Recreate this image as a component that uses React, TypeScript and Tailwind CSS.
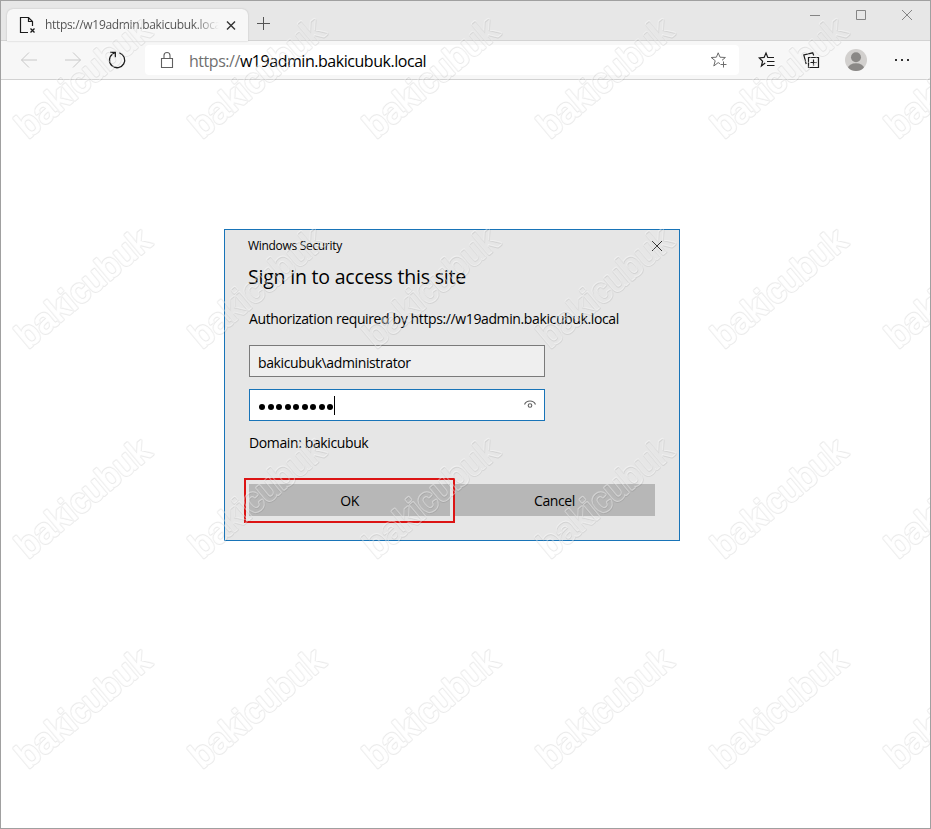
import type { ReactNode } from "react";

interface IconProps {
  size: number;
  className?: string;
  children: ReactNode;
}

function Icon({ size, className = "", children }: IconProps) {
  return (
    <svg
      width={size}
      height={size}
      viewBox={`0 0 ${size} ${size}`}
      fill="none"
      stroke="currentColor"
      className={`flex-shrink-0 ${className}`}
    >
      {children}
    </svg>
  );
}

function TabStrip() {
  return (
    <div className="flex h-10 border-b border-[#d3d3d3] bg-[#e7e7e7]">
      {/* Active tab */}
      <div className="mt-2 -mb-px ml-[6px] flex h-8 w-[241px] items-center rounded-t-md bg-[#f7f7f7] pl-3 shadow-[0_0_2px_#bbbbbb]">
        <Icon size={18} className="text-[#1b1b1b]">
          <path d="M9 16.5H1.5V1.5H9.5L13.5 5.5V10M9.5 1.5V5.5H13.5" strokeWidth="1.2" />
          <path d="M11.5 12.5L15.5 16.5M15.5 12.5L11.5 16.5" strokeWidth="1.3" />
        </Icon>
        <div className="ml-2 w-[174px] overflow-hidden bg-gradient-to-r from-[#505050] from-85% to-[#f7f7f7] bg-clip-text text-[12px] leading-4 tracking-[-0.32px] whitespace-nowrap text-transparent">
          https://w19admin.bakicubuk.local
        </div>
        <Icon size={12} className="ml-[6px] text-[#333333]">
          <path d="M2 2.5L10 10.5M10 2.5L2 10.5" strokeWidth="1.4" />
        </Icon>
      </div>
      <Icon size={16} className="mt-[14px] ml-[7px] text-[#555555]">
        <path d="M8.5 2V15M2 8.5H15" />
      </Icon>

      {/* Window controls */}
      <div className="mr-[17px] ml-auto flex gap-[34px] pt-2 text-[#858585]">
        <Icon size={12}>
          <path d="M1 6.5H11" />
        </Icon>
        <Icon size={12}>
          <path d="M1.5 1.5H10.5V10.5H1.5Z" />
        </Icon>
        <Icon size={12}>
          <path d="M1 1L11 11M11 1L1 11" />
        </Icon>
      </div>
    </div>
  );
}

function Toolbar() {
  return (
    <div className="flex h-[39px] items-center border-b border-[#d2d2d2] bg-[#f7f7f7] pl-[19px]">
      <Icon size={18} className="text-[#c8c8c8]">
        <path d="M17 9H1.5M9 1.5L1.5 9L9 16.5" />
      </Icon>
      <Icon size={18} className="ml-[26px] text-[#c8c8c8]">
        <path d="M1 9H16.5M9 1.5L16.5 9L9 16.5" />
      </Icon>
      <Icon size={20} className="ml-[25px] text-[#1b1b1b]">
        <path d="M12.4 2.9A7.6 7.6 0 1 1 5.6 4L8 2.5M3 2.3H8.3V7.2" strokeWidth="1.3" />
      </Icon>

      {/* Address bar */}
      <div className="ml-[18px] flex h-[30px] w-[594px] flex-shrink-0 items-center rounded bg-white pl-[13px]">
        <Icon size={18} className="text-[#606060]">
          <path d="M3.5 7.5H14.5V16.5H3.5ZM6 7.5V4.5A3 3 0 0 1 12 4.5V7.5" strokeWidth="1.1" />
        </Icon>
        <span className="ml-[13px] pt-px text-[16px] leading-5 tracking-[-0.46px] whitespace-nowrap text-black">
          <span className="text-[#707070]">https://</span>w19admin.bakicubuk.local
        </span>
        <Icon size={18} className="mr-[11px] ml-auto text-[#6c6c6c]">
          <path d="M10 12.7L8.2 11.6L3.8 15L5.2 9.7L1.2 6.5L6.4 6.2L8.2 1.8L10 6.2L15.4 6.5L12 9.3" />
          <path d="M13.5 10.5V16.5M10.5 13.5H16.5" />
        </Icon>
      </div>

      <Icon size={18} className="ml-[19px] text-[#1b1b1b]">
        <path d="M7.2 12L3.4 15L4.6 10.2L1.2 6.9L6.1 6.4L8 2L9.8 6.5H16M9 10.5H16.5M9 14.5H16.5" strokeWidth="1.2" />
      </Icon>
      <Icon size={18} className="ml-[26px] text-[#1b1b1b]">
        <path d="M6.5 6.5H16.5V16.5H6.5ZM11.5 8.5V14.5M8.5 11.5H14.5" strokeWidth="1.2" />
        <path d="M4.2 13L1.8 4L10.8 1.8L11.7 4.5" strokeWidth="1.2" />
      </Icon>
      <svg width="22" height="22" viewBox="0 0 22 22" className="ml-[25px] flex-shrink-0">
        <clipPath id="avatar">
          <circle cx="11" cy="11" r="11" />
        </clipPath>
        <g clipPath="url(#avatar)">
          <rect width="22" height="22" fill="#d2d0ce" />
          <circle cx="11" cy="8.3" r="5" fill="#8a8886" />
          <ellipse cx="11" cy="19" rx="8" ry="4.7" fill="#8a8886" />
        </g>
      </svg>
      <Icon size={16} className="ml-[27px] text-[#333333]">
        <path d="M1 8H3M7 8H9M13 8H15" strokeWidth="2" />
      </Icon>
    </div>
  );
}

function SecurityDialog() {
  return (
    <div className="mt-[149px] ml-[223px] h-[312px] w-[456px] border border-[#1874b8] bg-[#e6e6e6] text-black">
      <div className="flex h-[31px] items-center pr-4 pl-[23px]">
        <span className="text-[12px] tracking-[-0.31px]">Windows Security</span>
        <Icon size={12} className="ml-auto text-[#333333]">
          <path d="M1 1L11 11M11 1L1 11" />
        </Icon>
      </div>
      <h1 className="pl-[23px] text-[19.5px] leading-8 tracking-[-0.2px]">Sign in to access this site</h1>
      <div className="relative px-6 text-[14px] tracking-[-0.38px]">
        <p className="mt-4 leading-5">
          Authorization required by https://w19admin.bakicubuk.local
        </p>
        <div className="mt-4 flex h-8 w-[296px] items-center border border-[#7a7a7a] bg-[#efefef] px-2 pt-[2px]">
          bakicubuk\administrator
        </div>
        <div className="mt-3 flex h-8 w-[296px] items-center border border-[#1874b8] bg-white pr-2 pl-[9px]">
          <span className="flex gap-[2.5px]">
            {Array.from({ length: 9 }, (_, i) => (
              <span key={i} className="mt-[3px] h-[6px] w-[6px] rounded-full bg-black" />
            ))}
          </span>
          <span className="ml-px h-[19px] w-px bg-black" />
          <Icon size={12} className="ml-auto text-[#606060]">
            <path d="M0.5 5.5C2.5 0.8 9.5 0.8 11.5 5.5" strokeWidth="1.2" />
            <circle cx="6" cy="6.5" r="1.8" strokeWidth="1.1" />
          </Icon>
        </div>
        <p className="mt-3 leading-5">Domain: bakicubuk</p>
        <div className="mt-[31px] flex gap-1">
          <button className="h-8 w-[201px] bg-[#b7b7b7]">OK</button>
          <button className="h-8 w-[201px] bg-[#b7b7b7]">Cancel</button>
        </div>
        {/* Highlight around the OK button */}
        <div className="absolute -bottom-[7px] left-[19px] h-[45px] w-[211px] border-2 border-[#dc1414]" />
      </div>
    </div>
  );
}

const columns = [0, 1, 2, 3, 4, 5];
const rows = [0, 1, 2, 3];

function Watermark() {
  return (
    <svg
      width="931"
      height="829"
      viewBox="0 0 931 829"
      className="pointer-events-none absolute -top-px -left-px font-['Liberation_Sans']"
      fontSize="35"
      strokeLinejoin="round"
    >
      {/* Only the rim of each letter is kept, its inside stays see-through */}
      <mask id="rim" maskUnits="userSpaceOnUse" x="-20" y="-140" width="210" height="180">
        <text textLength="162.5" fill="white" stroke="white" strokeWidth="3.4">
          bakicubuk
        </text>
        <text textLength="162.5" fill="black" stroke="black" strokeWidth="1">
          bakicubuk
        </text>
      </mask>
      {rows.map((row) =>
        columns.map((col) => (
          <g
            key={`${row}-${col}`}
            transform={`translate(${28 + col * 174} ${138 + row * 210}) rotate(-40)`}
          >
            <g transform="translate(-0.3 0.9)">
              <rect x="-20" y="-60" width="210" height="90" fill="#000000" fillOpacity="0.08" mask="url(#rim)" />
            </g>
            <rect x="-20" y="-60" width="210" height="90" fill="#ffffff" fillOpacity="0.4" mask="url(#rim)" />
          </g>
        )),
      )}
    </svg>
  );
}

export default function App() {
  return (
    <div className="relative h-[829px] w-[931px] overflow-hidden border border-[#a0a0a0] bg-white font-['Open_Sans','Noto_Sans',sans-serif]">
      <TabStrip />
      <Toolbar />
      <SecurityDialog />
      <Watermark />
    </div>
  );
}
